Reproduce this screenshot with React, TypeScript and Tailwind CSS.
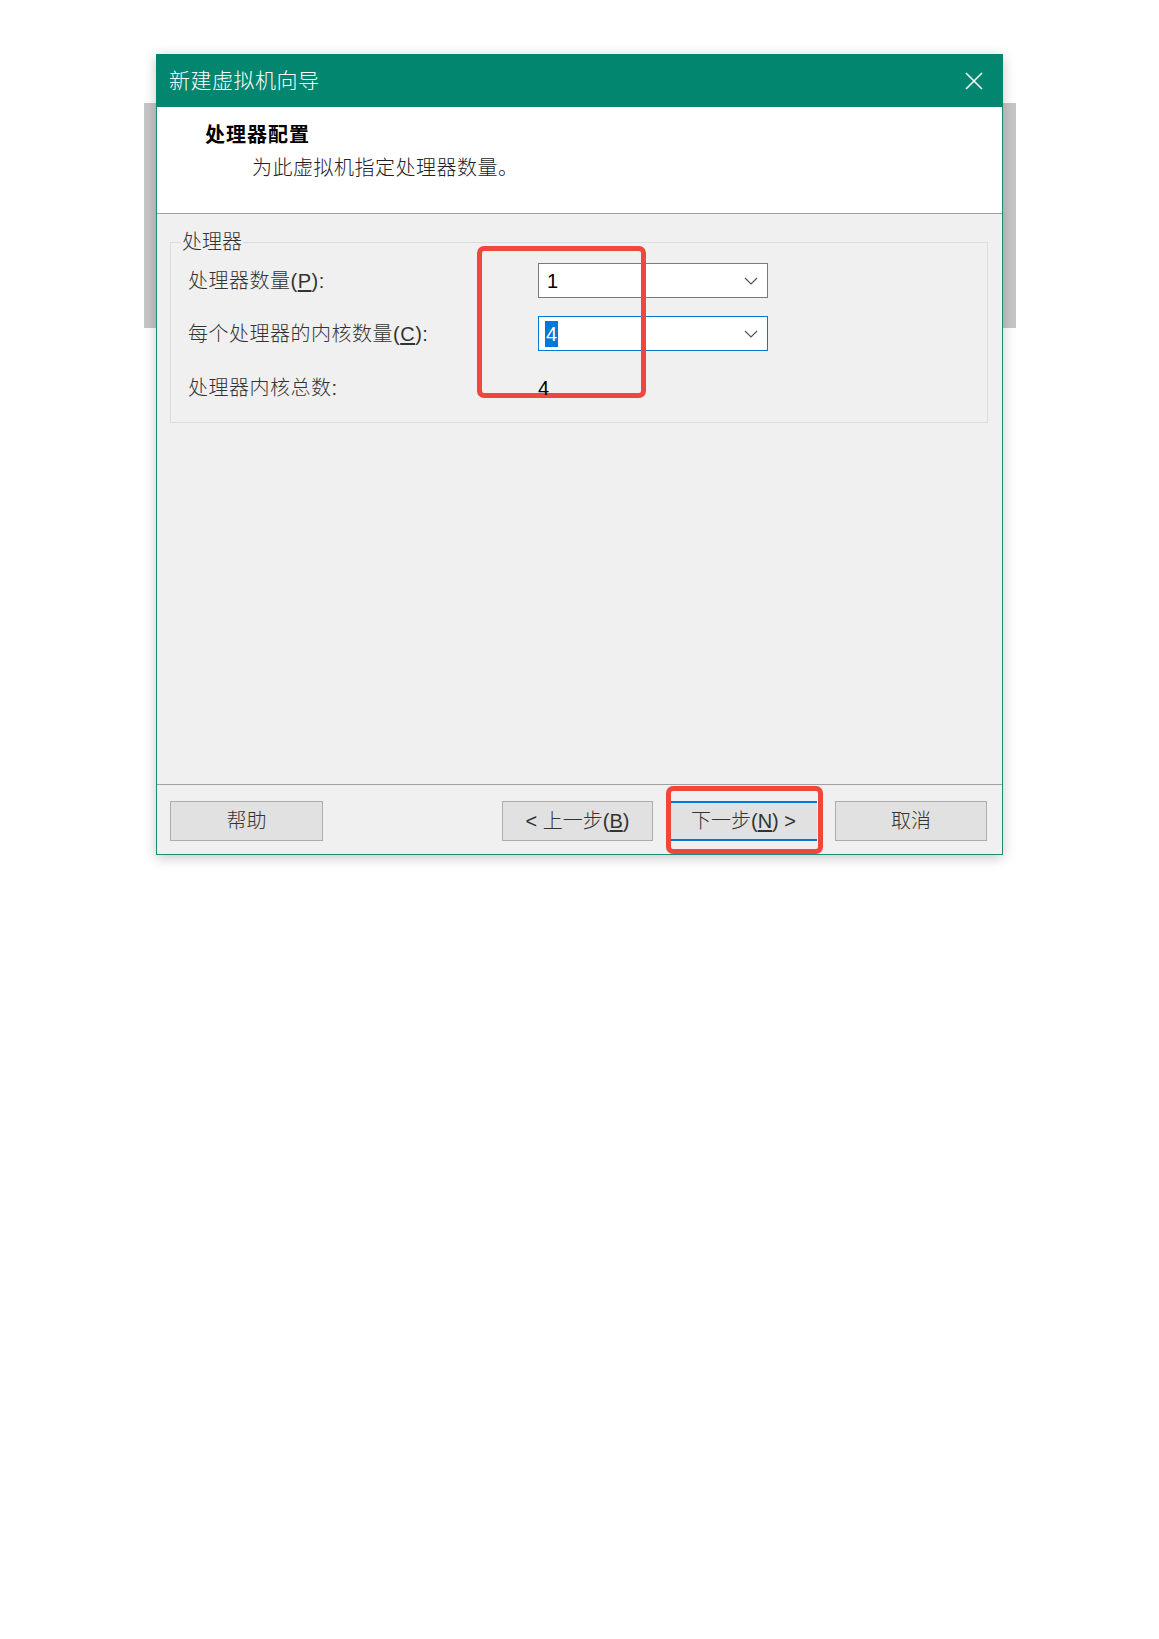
import React from "react";

const FONT = { fontFamily: '"Liberation Sans", "Noto Sans CJK SC", sans-serif' };

function Chevron() {
  return (
    <svg width="14" height="8" viewBox="0 0 14 8" fill="none">
      <path d="M1 1 L7 7 L13 1" stroke="#555" strokeWidth="1.2" />
    </svg>
  );
}

function Combo({ focused, value }: { focused?: boolean; value: string }) {
  return (
    <div
      className={`w-[230px] h-[35px] bg-white border flex items-center justify-between pl-[6px] pr-[9px] ${
        focused ? "border-[#0078d7]" : "border-[#7a7a7a]"
      }`}
    >
      {focused ? (
        <span className="bg-[#0078d7] text-white text-[20px] leading-[26px] h-[26px] w-[13px] flex items-center justify-center">
          {value}
        </span>
      ) : (
        <span className="text-[20px] leading-[26px] text-black pl-[2px]">{value}</span>
      )}
      <Chevron />
    </div>
  );
}

export default function App() {
  return (
    <div className="min-h-[1639px] w-full bg-white relative" style={FONT}>
      <div className="absolute left-[144px] top-[103px] w-[872px] h-[225px] bg-[#c6c6c6]" />
      <div className="relative pt-[54px] pl-[156px]">
        <div className="w-[847px] flex flex-col shadow-[0_3px_12px_rgba(0,0,0,0.22)]">
          {/* Title bar */}
          <div className="h-[53px] bg-[#03866f] flex items-center justify-between pl-[13px] pr-[20px]">
            <span className="text-white text-[21px] font-light tracking-[0.5px]">新建虚拟机向导</span>
            <svg width="18" height="18" viewBox="0 0 18 18">
              <path d="M1 1 L17 17 M17 1 L1 17" stroke="white" strokeWidth="1.6" />
            </svg>
          </div>
          <div className="border-x border-b border-[#1a8c78] flex flex-col">
            {/* Header */}
            <div className="h-[106px] bg-white pt-[14px] pl-[48px] flex flex-col">
              <span className="text-[20px] leading-[28px] font-bold text-black tracking-[1px]">处理器配置</span>
              <span className="text-[20px] leading-[28px] text-[#222] mt-[5px] pl-[47px] font-light tracking-[0.5px]">
                为此虚拟机指定处理器数量。
              </span>
            </div>
            {/* Body */}
            <div className="h-[571px] bg-[#f0f0f0] border-t border-[#a0a0a0] pt-[28px] pl-[13px] pr-[14px]">
              <div className="relative h-[181px] border border-[#dcdcdc]">
                <span className="absolute -top-[14px] left-[10px] bg-[#f0f0f0] px-[1px] text-[20px] leading-[26px] text-[#333] font-light">
                  处理器
                </span>
                <div className="flex flex-col pt-[20px] pl-[17px] text-[20px] text-[#333] font-light">
                  <div className="flex items-center h-[35px]">
                    <span className="w-[350px] tracking-[0.5px]">
                      处理器数量(<span className="underline underline-offset-2">P</span>):
                    </span>
                    <Combo value="1" />
                  </div>
                  <div className="flex items-center h-[35px] mt-[18px]">
                    <span className="w-[350px] tracking-[0.5px]">
                      每个处理器的内核数量(<span className="underline underline-offset-2">C</span>):
                    </span>
                    <Combo value="4" focused />
                  </div>
                  <div className="flex items-center h-[35px] mt-[19px]">
                    <span className="w-[350px] tracking-[0.5px]">处理器内核总数:</span>
                    <span className="relative z-10 text-black font-normal">4</span>
                  </div>
                </div>
                <div className="absolute z-[5] left-[306px] top-[3px] w-[169px] h-[152px] border-[5px] border-[#f0473d] rounded-[7px]" />
              </div>
            </div>
            {/* Footer */}
            <div className="h-[70px] bg-[#f0f0f0] border-t border-[#a0a0a0] pt-[16px] pl-[13px] pr-[15px] flex items-start text-[20px] text-[#333] font-light">
              <button className="w-[153px] h-[40px] bg-[#e1e1e1] border border-[#adadad] flex items-center justify-center">
                帮助
              </button>
              <div className="flex-1" />
              <button className="w-[151px] h-[40px] bg-[#e1e1e1] border border-[#adadad] flex items-center justify-center">
                &lt; 上一步(<span className="underline underline-offset-2">B</span>)
              </button>
              <div className="relative ml-[17px]">
                <button className="w-[147px] h-[40px] bg-[#e1e1e1] border-y-2 border-x-0 border-[#0078d7] flex items-center justify-center">
                  下一步(<span className="underline underline-offset-2">N</span>) &gt;
                </button>
                <div className="absolute -top-[15px] -bottom-[13px] -left-[4px] -right-[6px] border-[5px] border-[#f0473d] rounded-[7px]" />
              </div>
              <button className="ml-[18px] w-[152px] h-[40px] bg-[#e1e1e1] border border-[#adadad] flex items-center justify-center">
                取消
              </button>
            </div>
          </div>
        </div>
      </div>
    </div>
  );
}
